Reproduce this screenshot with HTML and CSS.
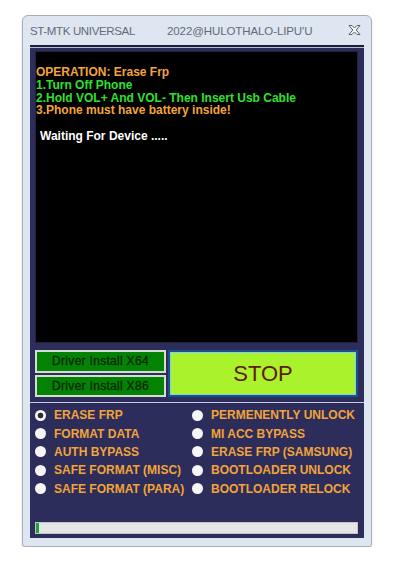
FILE: index.html
```html
<!DOCTYPE html>
<html>
<head>
<meta charset="utf-8">
<link rel="stylesheet" href="styles.css">
</head>
<body>
<div class="window">
  <div class="titlebar">
    <span class="t1">ST-MTK UNIVERSAL</span>
    <span class="t2">2022@HULOTHALO-LIPU'U</span>
    <svg class="close" width="13" height="10" viewBox="0 0 13 10">
      <path d="M1 0.5 H4 L6.5 3 L9 0.5 H12 L8.2 5 L12 9.5 H9 L6.5 7 L4 9.5 H1 L4.8 5 Z" fill="#f4f6f8" stroke="#5a6068" stroke-width="1" stroke-linejoin="round"/>
    </svg>
  </div>
  <div class="panel">
    <div class="topline"></div>
    <div class="log">
      <div class="orange">OPERATION: Erase Frp</div>
      <div class="green">1.Turn Off Phone</div>
      <div class="green">2.Hold VOL+ And VOL- Then Insert Usb Cable</div>
      <div class="orange">3.Phone must have battery inside!</div>
      <div class="blank">&nbsp;</div>
      <div class="white">Waiting For Device .....</div>
    </div>
    <div class="buttons">
      <div class="drivers">
        <div class="dbtn">Driver Install X64</div>
        <div class="dbtn">Driver Install X86</div>
      </div>
      <div class="stop"><span>STOP</span></div>
    </div>
    <div class="sep"></div>
    <div class="options">
      <div class="opt"><span class="radio checked"></span>ERASE FRP</div>
      <div class="opt"><span class="radio"></span>PERMENENTLY UNLOCK</div>
      <div class="opt"><span class="radio"></span>FORMAT DATA</div>
      <div class="opt"><span class="radio"></span>MI ACC BYPASS</div>
      <div class="opt"><span class="radio"></span>AUTH BYPASS</div>
      <div class="opt"><span class="radio"></span>ERASE FRP (SAMSUNG)</div>
      <div class="opt"><span class="radio"></span>SAFE FORMAT (MISC)</div>
      <div class="opt"><span class="radio"></span>BOOTLOADER UNLOCK</div>
      <div class="opt"><span class="radio"></span>SAFE FORMAT (PARA)</div>
      <div class="opt"><span class="radio"></span>BOOTLOADER RELOCK</div>
    </div>
    <div class="progress"><div class="fill"></div></div>
  </div>
</div>
</body>
</html>
```
FILE: styles.css
```css
* { box-sizing: border-box; }
html, body { margin: 0; padding: 0; background: #ffffff; }
body { font-family: "Liberation Sans", Arial, sans-serif; }

.window {
  margin: 15px 0 0 22px;
  width: 350px;
  height: 532px;
  background: #dde6f1;
  border: 1px solid #a9aeb6;
  border-radius: 6px 6px 3px 3px;
  box-shadow: 0 1px 2px rgba(0,0,0,0.15);
}

.titlebar {
  height: 29px;
  display: flex;
  align-items: center;
  padding-left: 7px;
  font-size: 11.5px;
  color: #646a76;
  letter-spacing: -0.35px;
}
.t1 { width: 137px; }
.t2 { width: 181px; letter-spacing: -0.1px; }
.close { display: block; margin-top: -2px; }

.panel {
  margin-left: 7px;
  width: 334px;
  height: 493px;
  background: #2c2d5a;
  border-top: 2px solid #1c1d3e;
  display: flex;
  flex-direction: column;
}
.topline { height: 1px; background: #b8bccf; }

.log {
  margin: 3px 0 0 5px;
  width: 323px;
  height: 292px;
  background: #000000;
  border: 1px solid #22233a;
  padding: 14px 0 0 0;
  font-weight: bold;
  font-size: 12px;
  line-height: 12.8px;
}
.orange { color: #f4a43a; }
.green { color: #2fe02f; }
.white { color: #ffffff; padding-left: 4px; }
.blank { height: 13px; }

.buttons {
  margin: 7px 0 0 5px;
  display: flex;
  gap: 2px;
  height: 47px;
}
.drivers { display: flex; flex-direction: column; gap: 2px; width: 131px; }
.dbtn {
  height: 22.5px;
  background: #038203;
  border: 2px solid #d4dcd4;
  color: #082808;
  font-size: 12px;
  letter-spacing: 0.3px;
  -webkit-text-stroke: 0.3px #082808;
  display: flex;
  align-items: center;
  justify-content: center;
}
.stop {
  width: 190px;
  background: #a9f22c;
  border: 2px solid #1d4f8c;
  box-shadow: inset 0 0 0 1px #7fd4e8;
  display: flex;
  align-items: center;
  justify-content: center;
  color: #601a02;
  font-size: 22px;
}

.sep { margin-top: 5px; height: 1px; background: #c6c9e0; }

.options {
  margin-top: 3px;
  padding-left: 5px;
  display: grid;
  grid-template-columns: 157px 1fr;
  grid-auto-rows: 18.4px;
  font-size: 12px;
  font-weight: bold;
  color: #f2a33a;
}
.opt { display: flex; align-items: center; white-space: nowrap; }
.radio {
  width: 11px;
  height: 11px;
  border-radius: 50%;
  background: #f6f6f6;
  margin-right: 8px;
  flex: none;
}
.radio.checked {
  background: radial-gradient(circle, #2e2e2e 0 2.6px, #f6f6f6 3.2px);
}

.progress {
  margin: 24px 0 0 5px;
  width: 323px;
  height: 12px;
  background: #e6e6e6;
  border: 1px solid #c4c4c4;
}
.fill { width: 3px; height: 100%; background: #12a83a; }
```
